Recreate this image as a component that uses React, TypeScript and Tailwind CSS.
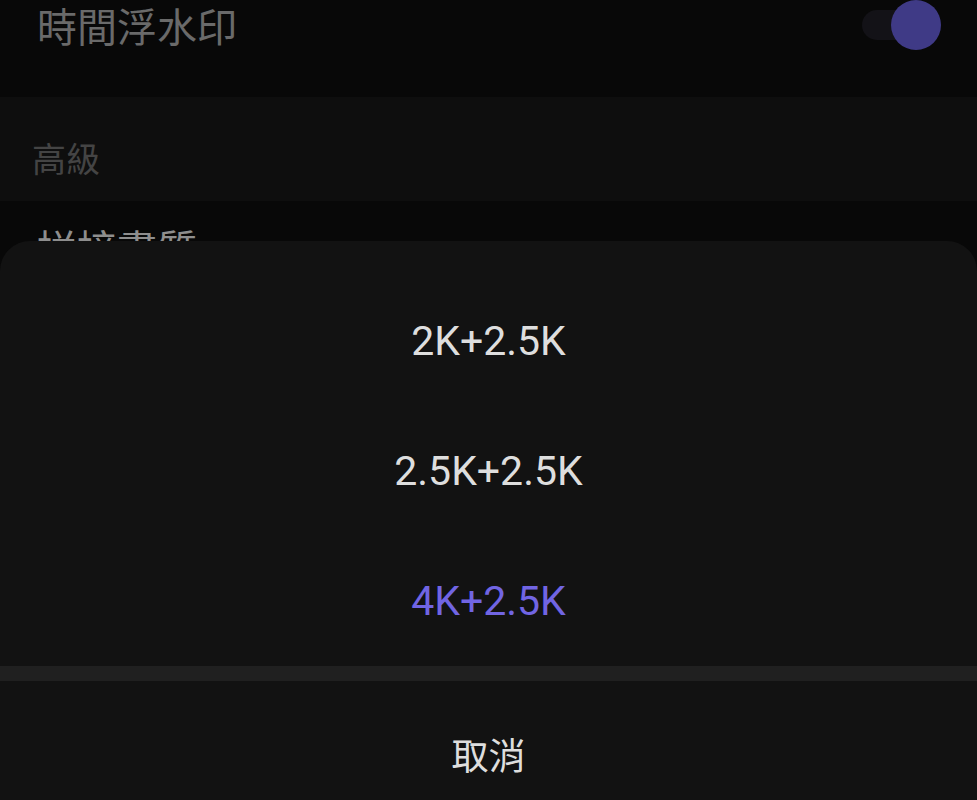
import React from 'react';

// ─── Data ─────────────────────────────────────────────────────────────────────

const options = [
  { label: '2K+2.5K', selected: false },
  { label: '2.5K+2.5K', selected: false },
  { label: '4K+2.5K', selected: true },
];

const fontStack = 'font-["Roboto","Noto_Sans_CJK_TC",sans-serif]';

// ─── Sub-components ───────────────────────────────────────────────────────────

const Toggle: React.FC = () => (
  <div className="relative w-[80px] h-[50px]">
    <div className="absolute left-[1px] top-[10px] w-[50px] h-[30px] rounded-full bg-[#131217]" />
    <div className="absolute right-0 top-0 w-[50px] h-[50px] rounded-full bg-[#3f3a86]" />
  </div>
);

// ─── Main Component ───────────────────────────────────────────────────────────

export default function App() {
  return (
    <div className={'relative w-[977px] h-[800px] overflow-hidden bg-[#080808] ' + fontStack}>

      {/* ── Settings list behind the sheet ── */}
      <div className="flex flex-col">
        <div className="h-[97px] flex items-start justify-between pl-[37px] pr-[36px]">
          <span className="mt-[9px] text-[40px] leading-[40px] text-[#6a6a6a]">時間浮水印</span>
          <Toggle />
        </div>

        <div className="h-[104px] bg-[#0e0e0e] flex items-center px-[32px]">
          <span className="mt-[22px] text-[34px] leading-[34px] text-[#444444]">高級</span>
        </div>

        <div className="h-[120px] px-[37px] pt-[30px]">
          <span className="text-[40px] leading-[40px] text-[#8e8e8e]">拼接畫質</span>
        </div>
      </div>

      {/* ── Bottom sheet ── */}
      <div className="absolute left-0 right-0 top-[241px] bottom-0 rounded-t-[30px] bg-[#121212] flex flex-col">
        <div className="shrink-0 pt-[35px] flex flex-col">
          {options.map(function (o) {
            const cls =
              'text-[41px] leading-[41px] ' + (o.selected ? 'text-[#7165e3]' : 'text-[#dedede]');
            return (
              <div key={o.label} className="h-[130px] flex items-center justify-center">
                <span className={cls}>{o.label}</span>
              </div>
            );
          })}
        </div>

        <div className="shrink-0 h-[15px] bg-[#202020]" />

        <div className="shrink-0 h-[152px] flex items-center justify-center">
          <span className="text-[37px] leading-[37px] text-[#dedede]">取消</span>
        </div>
      </div>
    </div>
  );
}
